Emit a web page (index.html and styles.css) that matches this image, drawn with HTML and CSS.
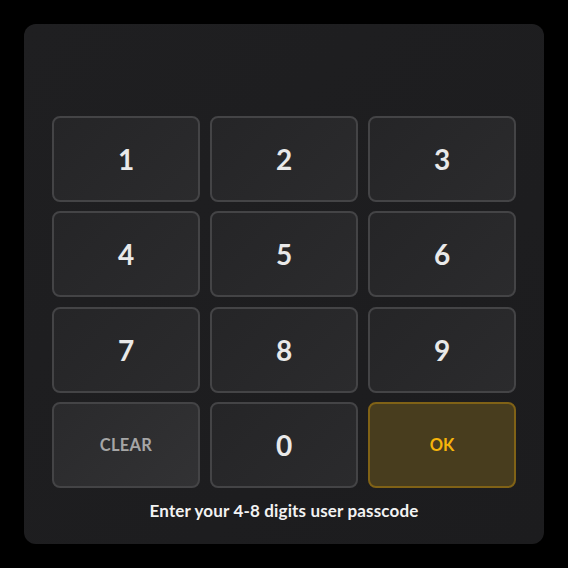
FILE: index.html
```html
<!DOCTYPE html>
<html lang="en">
<head>
<meta charset="utf-8">
<title>Passcode</title>
<link rel="stylesheet" href="styles.css">
</head>
<body>
<div class="overlay">
  <div class="card">
    <div class="keypad">
      <button class="key">1</button>
      <button class="key">2</button>
      <button class="key">3</button>
      <button class="key">4</button>
      <button class="key">5</button>
      <button class="key">6</button>
      <button class="key">7</button>
      <button class="key">8</button>
      <button class="key">9</button>
      <button class="key key-clear">CLEAR</button>
      <button class="key">0</button>
      <button class="key key-ok">OK</button>
    </div>
    <p class="hint">Enter your 4-8 digits user passcode</p>
  </div>
</div>
</body>
</html>
```
FILE: styles.css
```css
html, body {
  margin: 0;
  padding: 0;
  background: #000;
  width: 568px;
  height: 568px;
  overflow: hidden;
}
.overlay {
  padding: 24px;
}
.card {
  width: 520px;
  height: 520px;
  box-sizing: border-box;
  border-radius: 12px;
  background: linear-gradient(135deg, #1f1f21 0%, #1c1c1e 100%);
  padding: 92px 28px 0;
  display: flex;
  flex-direction: column;
  align-items: stretch;
}
.keypad {
  display: grid;
  grid-template-columns: repeat(3, 148px);
  grid-template-rows: repeat(4, 86px);
  column-gap: 10px;
  row-gap: 9.3px;
}
.key {
  box-sizing: border-box;
  border: 2px solid #444446;
  border-radius: 8px;
  background: linear-gradient(135deg, #252527 0%, #2b2b2d 100%);
  color: #e9e9e9;
  font-family: Lato, "Noto Sans", sans-serif;
  font-weight: 700;
  font-size: 28px;
  display: flex;
  align-items: center;
  justify-content: center;
  padding: 0;
}
.key-clear {
  font-size: 16.5px;
  color: #a6a6a6;
  letter-spacing: 0.3px;
  background: linear-gradient(135deg, #2a2a2c 0%, #323234 100%);
}
.key-ok {
  font-size: 16.5px;
  color: #f6b40a;
  background: #483d1e;
  border-color: #806216;
}
.hint {
  margin: 13px 0 0;
  text-align: center;
  color: #f2f2f2;
  font-family: Lato, "Noto Sans", sans-serif;
  font-weight: 700;
  font-size: 17px;
  letter-spacing: 0.15px;
  line-height: 20px;
}
```
